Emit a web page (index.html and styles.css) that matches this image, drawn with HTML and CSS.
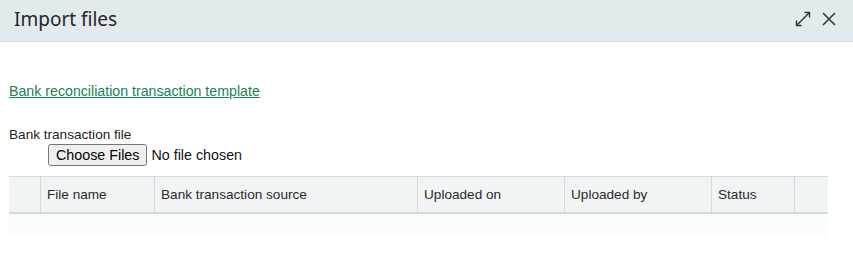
FILE: index.html
```html
<!DOCTYPE html>
<html>
<head>
<meta charset="utf-8">
<link rel="stylesheet" href="styles.css">
</head>
<body>
<div class="dialog">
  <header class="dlg-header">
    <h1 class="dlg-title">Import files</h1>
    <div class="dlg-actions">
      <button class="icon-btn" aria-label="Maximize">
        <svg width="18" height="18" viewBox="0 0 18 18" fill="none" stroke="#333" stroke-width="1.4">
          <path d="M2.5 15.5 L15.5 2.5"/>
          <path d="M10.5 2.5 H15.5 V7.5"/>
          <path d="M2.5 10.5 V15.5 H7.5"/>
        </svg>
      </button>
      <button class="icon-btn" aria-label="Close">
        <svg width="16" height="16" viewBox="0 0 16 16" fill="none" stroke="#333" stroke-width="1.5">
          <path d="M2 2 L14 14 M14 2 L2 14"/>
        </svg>
      </button>
    </div>
  </header>
  <div class="dlg-body">
    <a class="tpl-link" href="#">Bank reconciliation transaction template</a>
    <div class="field">
      <label class="field-label">Bank transaction file</label>
      <input class="file-input" type="file" multiple>
    </div>
    <div class="grid">
      <div class="grid-head">
        <div class="col col-sel"></div>
        <div class="col col-name">File name</div>
        <div class="col col-src">Bank transaction source</div>
        <div class="col col-on">Uploaded on</div>
        <div class="col col-by">Uploaded by</div>
        <div class="col col-status">Status</div>
        <div class="col col-end"></div>
      </div>
      <div class="grid-empty"></div>
    </div>
  </div>
</div>
</body>
</html>
```
FILE: styles.css
```css
html, body {
  margin: 0;
  padding: 0;
  background: #fff;
}
body {
  font-family: "Liberation Sans", Arial, sans-serif;
  color: #333;
}
.dialog {
  width: 853px;
}
.dlg-header {
  height: 42px;
  background: #e3eaed;
  border-bottom: 1px solid #d6dde0;
  box-sizing: border-box;
  display: flex;
  align-items: center;
  justify-content: space-between;
  padding: 0 14px 4px 14px;
}
.dlg-title {
  margin: 0;
  font-family: "Noto Sans", sans-serif;
  font-weight: 400;
  font-size: 19px;
  line-height: 24px;
  color: #262626;
}
.dlg-actions {
  display: flex;
  align-items: center;
  gap: 8px;
  margin-right: 1px;
}
.icon-btn {
  border: 0;
  background: none;
  padding: 0;
  width: 18px;
  height: 18px;
  display: flex;
  align-items: center;
  justify-content: center;
}
.dlg-body {
  padding: 40px 9px 0 9px;
}
.tpl-link {
  display: inline-block;
  font-size: 14.2px;
  line-height: 17px;
  color: #197f54;
  text-decoration: underline;
}
.field {
  margin-top: 27px;
  display: flex;
  flex-direction: column;
  align-items: flex-start;
}
.field-label {
  font-size: 13.6px;
  line-height: 16px;
  color: #222;
}
.file-input {
  margin: 1px 0 0 39px;
  font-family: "Liberation Sans", Arial, sans-serif;
  font-size: 14.3px;
  color: #111;
}
.grid {
  margin-top: 10px;
  width: 819px;
}
.grid-head {
  display: flex;
  height: 38px;
  box-sizing: border-box;
  background: #f0f4f5;
  border-top: 1px solid #d2d9dc;
  border-bottom: 2px solid #d2d9dc;
}
.col {
  box-sizing: border-box;
  display: flex;
  align-items: center;
  padding-left: 6px;
  font-size: 13.6px;
  color: #2a2a2a;
  border-right: 1px solid #d2d9dc;
}
.col-sel { width: 32px; }
.col-name { width: 114px; }
.col-src { width: 263px; }
.col-on { width: 147px; }
.col-by { width: 147px; }
.col-status { width: 83px; }
.col-end { width: 33px; border-right: 0; }
.grid-empty {
  height: 24px;
  background: #fbfcfc;
  border-radius: 0 0 4px 4px;
}
```
